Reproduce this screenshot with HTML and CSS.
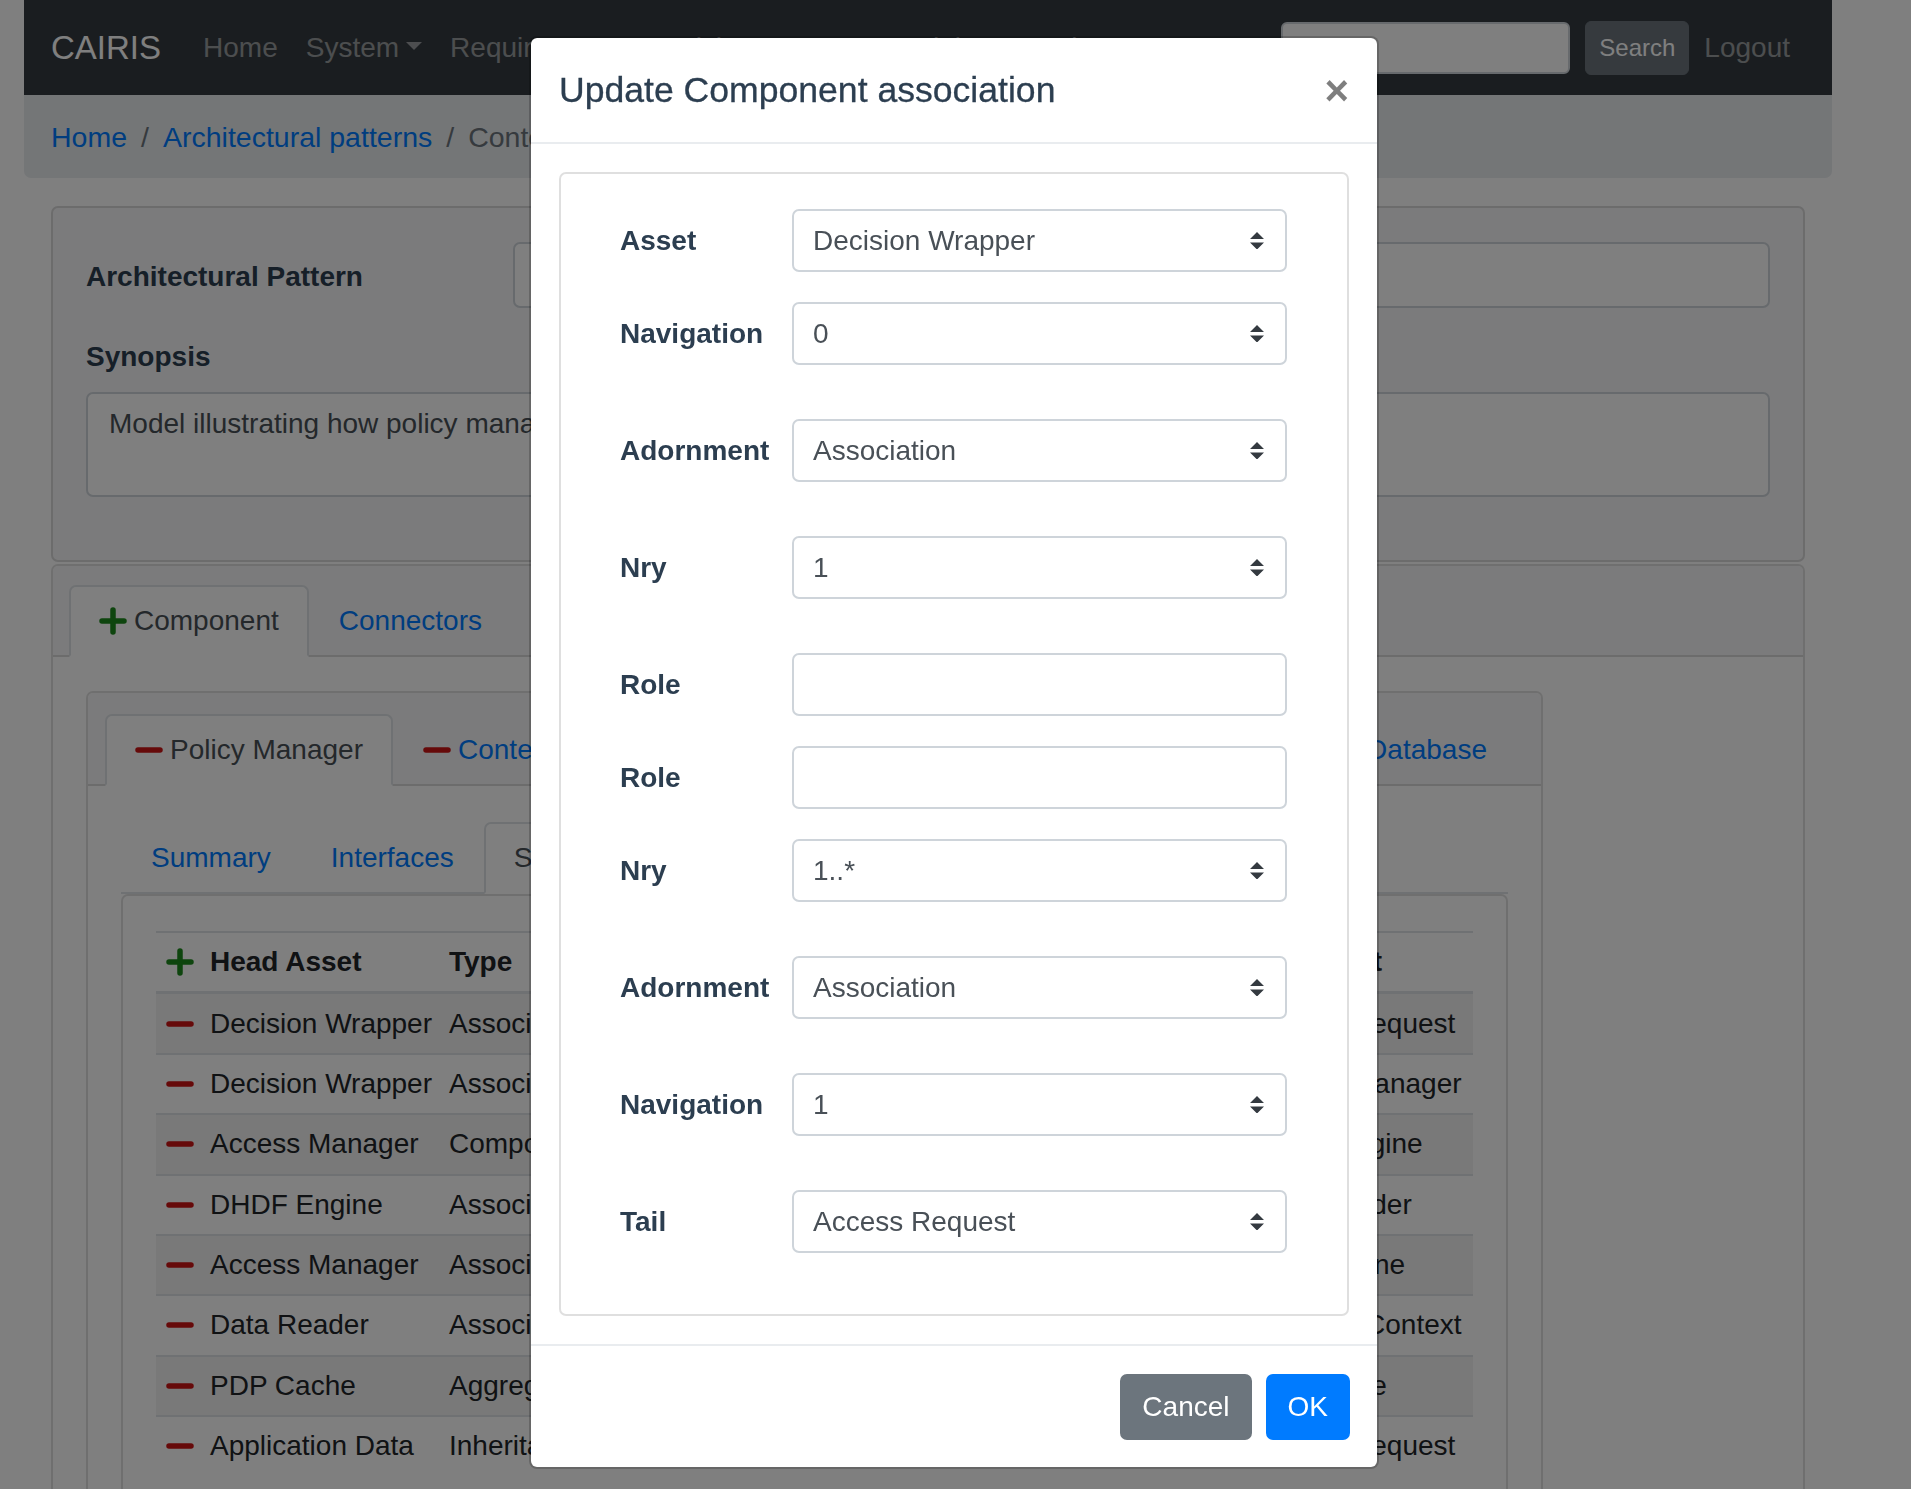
FILE: index.html
```html
<!DOCTYPE html>
<html lang="en">
<head>
<meta charset="utf-8">
<title>CAIRIS - Architectural pattern</title>
<link rel="stylesheet" href="styles.css">
</head>
<body class="modal-open">
<div class="page">
  <nav class="navbar">
    <a class="brand" href="#">CAIRIS</a>
    <ul class="nav-links">
      <li><a class="nav-link" href="#">Home</a></li>
      <li><a class="nav-link caret" href="#">System</a></li>
      <li><a class="nav-link caret" href="#">Requirements</a></li>
      <li><a class="nav-link caret" href="#">Risks</a></li>
      <li><a class="nav-link caret" href="#">UX</a></li>
      <li><a class="nav-link caret" href="#">Models</a></li>
      <li><a class="nav-link caret" href="#">Options</a></li>
    </ul>
    <form class="search">
      <input class="search-input" type="text" aria-label="Search">
      <button class="btn-search" type="button">Search</button>
    </form>
    <a class="nav-link logout" href="#">Logout</a>
  </nav>

  <ol class="breadcrumb">
    <li class="crumb"><a href="#">Home</a></li>
    <li class="crumb"><a href="#">Architectural patterns</a></li>
    <li class="crumb active">Context Policy Management</li>
  </ol>

  <main class="content">
    <section class="card card-pattern">
      <div class="field-row">
        <label class="field-label">Architectural Pattern</label>
        <div class="form-control">Context Policy Management</div>
      </div>
      <label class="field-label synopsis-label">Synopsis</label>
      <div class="form-control textarea">Model illustrating how policy management is handled in context.</div>
    </section>

    <section class="card card-main">
      <div class="card-header">
        <ul class="tabs">
          <li class="tab active"><svg class="ico plus" viewBox="0 0 28 28"><path d="M14 3v22M3 14h22"/></svg>Component</li>
          <li class="tab">Connectors</li>
        </ul>
      </div>
      <div class="card-body">
        <div class="card component-card">
          <div class="card-header">
            <ul class="tabs">
              <li class="tab active"><svg class="ico minus" viewBox="0 0 28 28"><path d="M3 14h22"/></svg>Policy Manager</li>
              <li class="tab"><svg class="ico minus" viewBox="0 0 28 28"><path d="M3 14h22"/></svg>Context Handler</li>
              <li class="tab"><svg class="ico minus" viewBox="0 0 28 28"><path d="M3 14h22"/></svg>Decision Handler</li>
              <li class="tab"><svg class="ico minus" viewBox="0 0 28 28"><path d="M3 14h22"/></svg>Access Manager</li>
              <li class="tab"><svg class="ico minus" viewBox="0 0 28 28"><path d="M3 14h22"/></svg>Database</li>
            </ul>
          </div>
          <div class="card-body inner-body">
            <ul class="tabs subtabs">
              <li class="tab">Summary</li>
              <li class="tab">Interfaces</li>
              <li class="tab active">Structure</li>
              <li class="tab">Requirements</li>
              <li class="tab">Goals</li>
            </ul>
            <div class="card tab-box">
              <table class="assoc-table">
                <colgroup>
                  <col class="c-icon"><col class="c-head"><col class="c-type"><col class="c-nav"><col class="c-nry"><col class="c-role"><col class="c-role"><col class="c-nry2"><col class="c-type2"><col class="c-nav"><col>
                </colgroup>
                <thead>
                  <tr><th><svg class="ico plus" viewBox="0 0 28 28"><path d="M14 3v22M3 14h22"/></svg></th><th>Head Asset</th><th>Type</th><th>Nav</th><th>Nry</th><th>Role</th><th>Role</th><th>Nry</th><th>Type</th><th>Nav</th><th>Tail Asset</th></tr>
                </thead>
                <tbody>
                  <tr><td><svg class="ico minus" viewBox="0 0 28 28"><path d="M3 14h22"/></svg></td><td>Decision Wrapper</td><td>Association</td><td>0</td><td>1</td><td></td><td></td><td>1..*</td><td>Association</td><td>1</td><td>Access Request</td></tr>
                  <tr><td><svg class="ico minus" viewBox="0 0 28 28"><path d="M3 14h22"/></svg></td><td>Decision Wrapper</td><td>Association</td><td>0</td><td>1</td><td></td><td></td><td>1</td><td>Association</td><td>1</td><td>Access Manager</td></tr>
                  <tr><td><svg class="ico minus" viewBox="0 0 28 28"><path d="M3 14h22"/></svg></td><td>Access Manager</td><td>Composition</td><td>0</td><td>1</td><td></td><td></td><td>*</td><td>Association</td><td>1</td><td>Policy Engine</td></tr>
                  <tr><td><svg class="ico minus" viewBox="0 0 28 28"><path d="M3 14h22"/></svg></td><td>DHDF Engine</td><td>Association</td><td>0</td><td>1</td><td></td><td></td><td>1</td><td>Association</td><td>1</td><td>Data Reader</td></tr>
                  <tr><td><svg class="ico minus" viewBox="0 0 28 28"><path d="M3 14h22"/></svg></td><td>Access Manager</td><td>Association</td><td>0</td><td>1</td><td></td><td></td><td>1</td><td>Association</td><td>1</td><td>PDP Engine</td></tr>
                  <tr><td><svg class="ico minus" viewBox="0 0 28 28"><path d="M3 14h22"/></svg></td><td>Data Reader</td><td>Association</td><td>0</td><td>1</td><td></td><td></td><td>1</td><td>Association</td><td>1</td><td>Request Context</td></tr>
                  <tr><td><svg class="ico minus" viewBox="0 0 28 28"><path d="M3 14h22"/></svg></td><td>PDP Cache</td><td>Aggregation</td><td>0</td><td>1</td><td></td><td></td><td>1</td><td>Association</td><td>1</td><td>Data Store</td></tr>
                  <tr><td><svg class="ico minus" viewBox="0 0 28 28"><path d="M3 14h22"/></svg></td><td>Application Data</td><td>Inheritance</td><td>0</td><td>1</td><td></td><td></td><td>1</td><td>Association</td><td>1</td><td>Access Request</td></tr>
                </tbody>
              </table>
            </div>
          </div>
        </div>
      </div>
    </section>
  </main>
</div>

<div class="backdrop"></div>

<div class="modal-layer">
  <div class="modal" role="dialog">
    <div class="modal-header">
      <h5 class="modal-title">Update Component association</h5>
      <button class="close" type="button" aria-label="Close">×</button>
    </div>
    <div class="modal-body">
      <div class="assoc-box">
        <div class="assoc-row">
          <label class="assoc-label">Asset</label>
          <div class="select"><span>Decision Wrapper</span><svg class="arrows" viewBox="0 0 4 5"><path d="M2 0L0 2h4zm0 5L0 3h4z"/></svg></div>
        </div>
        <div class="assoc-row wide">
          <label class="assoc-label">Navigation</label>
          <div class="select"><span>0</span><svg class="arrows" viewBox="0 0 4 5"><path d="M2 0L0 2h4zm0 5L0 3h4z"/></svg></div>
        </div>
        <div class="assoc-row wide">
          <label class="assoc-label">Adornment</label>
          <div class="select"><span>Association</span><svg class="arrows" viewBox="0 0 4 5"><path d="M2 0L0 2h4zm0 5L0 3h4z"/></svg></div>
        </div>
        <div class="assoc-row wide">
          <label class="assoc-label">Nry</label>
          <div class="select"><span>1</span><svg class="arrows" viewBox="0 0 4 5"><path d="M2 0L0 2h4zm0 5L0 3h4z"/></svg></div>
        </div>
        <div class="assoc-row">
          <label class="assoc-label">Role</label>
          <div class="input"></div>
        </div>
        <div class="assoc-row">
          <label class="assoc-label">Role</label>
          <div class="input"></div>
        </div>
        <div class="assoc-row wide">
          <label class="assoc-label">Nry</label>
          <div class="select"><span>1..*</span><svg class="arrows" viewBox="0 0 4 5"><path d="M2 0L0 2h4zm0 5L0 3h4z"/></svg></div>
        </div>
        <div class="assoc-row wide">
          <label class="assoc-label">Adornment</label>
          <div class="select"><span>Association</span><svg class="arrows" viewBox="0 0 4 5"><path d="M2 0L0 2h4zm0 5L0 3h4z"/></svg></div>
        </div>
        <div class="assoc-row wide">
          <label class="assoc-label">Navigation</label>
          <div class="select"><span>1</span><svg class="arrows" viewBox="0 0 4 5"><path d="M2 0L0 2h4zm0 5L0 3h4z"/></svg></div>
        </div>
        <div class="assoc-row last">
          <label class="assoc-label">Tail</label>
          <div class="select"><span>Access Request</span><svg class="arrows" viewBox="0 0 4 5"><path d="M2 0L0 2h4zm0 5L0 3h4z"/></svg></div>
        </div>
      </div>
    </div>
    <div class="modal-footer">
      <button class="btn btn-secondary" type="button">Cancel</button>
      <button class="btn btn-primary" type="button">OK</button>
    </div>
  </div>
</div>
</body>
</html>
```

FILE: styles.css
```css
* { box-sizing: border-box; }

html, body { margin: 0; padding: 0; }

body {
  font-family: "Liberation Sans", Arial, Helvetica, sans-serif;
  font-size: 28px;
  line-height: 42px;
  color: #212529;
  background: #fff;
}

body.modal-open { overflow: hidden; height: 1489px; }

ul, ol { list-style: none; margin: 0; padding: 0; }

a { text-decoration: none; }

.page { width: 1808px; margin-left: 24px; }

/* ---------- navbar ---------- */
.navbar {
  display: flex;
  align-items: center;
  height: 95px;
  padding: 0 28px 0 27px;
  background: #343a40;
}

.brand {
  font-size: 33px;
  line-height: 44px;
  color: #fff;
  margin-right: 28px;
  white-space: nowrap;
}

.nav-links { display: flex; }

.nav-link {
  display: block;
  padding: 0 14px;
  color: rgba(255, 255, 255, 0.5);
  white-space: nowrap;
}

.caret::after {
  content: "";
  display: inline-block;
  margin-left: 7px;
  vertical-align: 7px;
  border-top: 8.4px solid;
  border-right: 8.4px solid transparent;
  border-left: 8.4px solid transparent;
}

.search { margin-left: auto; display: flex; align-items: center; }

.search-input {
  width: 289px;
  height: 52px;
  margin: 0 15px 0 0;
  border: 2px solid #ced4da;
  border-radius: 6px;
  background: #fff;
}

.btn-search {
  height: 54px;
  padding: 0 13px;
  font: inherit;
  font-size: 24px;
  color: #fff;
  background: #6c757d;
  border: 1px solid #6c757d;
  border-radius: 6px;
}

.logout { margin-left: 1px; }

/* ---------- breadcrumb ---------- */
.breadcrumb {
  display: flex;
  margin-bottom: 28px;
  padding: 21px 27px 20px;
  background: #e9ecef;
  border-radius: 0 0 7px 7px;
  white-space: nowrap;
  font-size: 28.5px;
}

.crumb a { color: #007bff; }
.crumb + .crumb::before { content: "/"; padding: 0 14px; color: #6c757d; }
.crumb.active { color: #6c757d; }

/* ---------- content ---------- */
.content { padding: 0 27px; }

.card {
  border: 2px solid rgba(0, 0, 0, 0.125);
  border-radius: 7px;
  background: #fff;
}

.card-pattern { background: #f7f7f8; padding: 34px 33px 35px; }

.field-row {
  display: grid;
  grid-template-columns: 401px 1fr;
  column-gap: 26px;
  align-items: center;
  margin-bottom: 28px;
}

.field-row .field-label { padding-top: 4px; }

.field-label { display: block; font-weight: bold; color: #2c3e50; white-space: nowrap; }

.synopsis-label { margin-bottom: 14px; }

.form-control {
  height: 66px;
  padding: 0 21px;
  display: flex;
  align-items: center;
  border: 2px solid #ced4da;
  border-radius: 7px;
  background: #fff;
  color: #495057;
  white-space: nowrap;
  overflow: hidden;
}

.textarea { height: 105px; align-items: flex-start; padding-top: 9px; margin-bottom: 28px; }

.card-main { margin-top: 2px; height: 960px; }

.card-header {
  background: #f7f7f8;
  border-bottom: 2px solid rgba(0, 0, 0, 0.125);
  padding: 19px 16px 0;
  border-radius: 5px 5px 0 0;
}

.tabs { display: flex; margin-bottom: -2px; white-space: nowrap; }

.tab {
  display: flex;
  align-items: center;
  padding: 13px 28px;
  border: 2px solid transparent;
  border-radius: 7px 7px 0 0;
  color: #007bff;
}

.tab.active {
  color: #495057;
  background: #fff;
  border-color: #dee2e6 #dee2e6 #fff;
}

.card-body { padding: 34px 33px; }

.component-card { width: 1457px; }

.component-card .card-header { padding-top: 21px; padding-left: 17px; }

.inner-body { padding: 36px 33px; }

.subtabs { border-bottom: 2px solid #dee2e6; margin-bottom: 0; }
.subtabs .tab { margin-bottom: -2px; }

.tab-box { padding: 35px 33px; height: 700px; }

/* ---------- icons ---------- */
.ico { width: 28px; height: 28px; flex: none; margin-right: 7px; fill: none; stroke-width: 5.5; stroke-linecap: round; }
.ico.plus { stroke: #1c8a1c; }
.ico.minus { stroke: #cc1414; }

/* ---------- table ---------- */
.assoc-table {
  width: 100%;
  table-layout: fixed;
  border-collapse: collapse;
  color: #212529;
}

.c-icon { width: 46px; }
.c-head { width: 239px; }
.c-type { width: 170px; }
.c-nav { width: 80px; }
.c-nry { width: 70px; }
.c-role { width: 80px; }
.c-nry2 { width: 80px; }
.c-type2 { width: 164px; }

.assoc-table th,
.assoc-table td {
  padding: 8.2px 8px;
  border-top: 2px solid #dee2e6;
  text-align: left;
  white-space: nowrap;
  overflow: hidden;
  vertical-align: middle;
}

.assoc-table th { border-bottom: 3px solid #dee2e6; }
.assoc-table thead th { font-weight: bold; }
.assoc-table th .ico, .assoc-table td .ico { display: block; margin: 0 0 0 2px; }

.assoc-table tbody tr:nth-child(odd) { background: rgba(0, 0, 0, 0.05); }

/* ---------- modal ---------- */
.backdrop {
  position: fixed;
  inset: 0;
  background: rgba(0, 0, 0, 0.5);
}

.modal-layer {
  position: fixed;
  inset: 0;
  display: flex;
  justify-content: flex-start;
  align-items: flex-start;
  padding: 36px 0 0 529px;
}

.modal {
  width: 850px;
  background: #fff;
  border: 2px solid rgba(0, 0, 0, 0.2);
  border-radius: 8px;
  background-clip: padding-box;
}

.modal-header {
  display: flex;
  align-items: center;
  padding: 28px 28px 27px;
  border-bottom: 2px solid #e9ecef;
}

.modal-title {
  margin: 0;
  font-size: 35.6px;
  line-height: 49px;
  font-weight: normal;
  color: #2c3e50;
  -webkit-text-stroke: 0.3px #2c3e50;
}

.close {
  margin-left: auto;
  padding: 0;
  border: 0;
  background: none;
  font: inherit;
  font-size: 42px;
  line-height: 42px;
  font-weight: bold;
  color: #000;
  opacity: 0.5;
}

.modal-body { padding: 28px; }

.assoc-box {
  border: 2px solid rgba(0, 0, 0, 0.125);
  border-radius: 7px;
  padding: 35px 60px 35px 59px;
}

.assoc-row {
  display: grid;
  grid-template-columns: 148px 1fr;
  column-gap: 24px;
  align-items: center;
  margin-bottom: 30px;
}

.assoc-row.wide { margin-bottom: 54px; }
.assoc-row.last { margin-bottom: 26px; }

.assoc-label { font-weight: bold; color: #2c3e50; white-space: nowrap; }

.select, .input {
  height: 63px;
  display: flex;
  align-items: center;
  justify-content: space-between;
  padding: 0 21px 0 19px;
  border: 2px solid #ced4da;
  border-radius: 7px;
  background: #fff;
  color: #495057;
  white-space: nowrap;
}

.arrows { width: 14px; height: 17.5px; fill: #343a40; }

.modal-footer {
  display: flex;
  justify-content: flex-end;
  gap: 14px;
  padding: 28px 27px 27px;
  border-top: 2px solid #e9ecef;
}

.btn {
  padding: 10px 20px;
  font: inherit;
  line-height: 42px;
  border: 2px solid transparent;
  border-radius: 7px;
  color: #fff;
}

.btn-secondary { background: #6c757d; border-color: #6c757d; }
.btn-primary { background: #007bff; border-color: #007bff; }
```
